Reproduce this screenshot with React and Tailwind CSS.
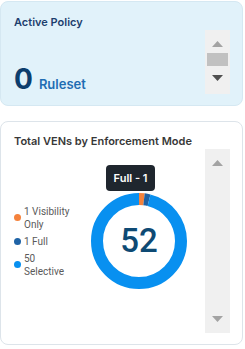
import React from "react";

function ScrollArrowUp({ color }) {
  return (
    <svg width="11" height="6" viewBox="0 0 11 6"><polygon points="5.5,0 11,6 0,6" fill={color} /></svg>
  );
}
function ScrollArrowDown({ color }) {
  return (
    <svg width="11" height="6" viewBox="0 0 11 6"><polygon points="0,0 11,0 5.5,6" fill={color} /></svg>
  );
}

function Donut() {
  const r = 42;
  const c = 2 * Math.PI * r;
  const total = 52;
  const segs = [
    { v: 1, color: "#f5823c" },
    { v: 1, color: "#1f63a6" },
    { v: 50, color: "#0890f0" },
  ];
  let off = 0;
  return (
    <svg width="96" height="96" viewBox="0 0 96 96">
      <g transform="rotate(-90 48 48)">
        {segs.map((s, i) => {
          const len = (s.v / total) * c;
          const el = (
            <circle
              key={i}
              cx="48"
              cy="48"
              r={r}
              fill="none"
              stroke={s.color}
              strokeWidth="12"
              strokeDasharray={`${len} ${c - len}`}
              strokeDashoffset={-off}
            />
          );
          off += len;
          return el;
        })}
      </g>
    </svg>
  );
}

export default function App() {
  return (
    <div className="w-[245px] h-[349px] bg-white pt-[1px]" style={{ fontFamily: "Inter, 'Noto Sans', sans-serif" }}>
      <div className="w-[243px] h-[105px] rounded-[8px] border border-[#d5e8f2] bg-[#e1f2fa] flex pl-[13px] pr-[12px]">
        <div className="flex-1 flex flex-col justify-between pt-[12px] pb-[11px]">
          <div className="text-[11px] leading-[16px] font-semibold text-[#1d3f6e]">Active Policy</div>
          <div className="flex items-baseline gap-[6px]">
            <span className="text-[28px] leading-[28px] font-bold text-[#0c3e6d]">0</span>
            <span className="text-[13px] font-semibold text-[#1f6db3]">Ruleset</span>
          </div>
        </div>
        <div className="mt-[28px] w-[25px] h-[64px] bg-[#f0f0f0] flex flex-col items-center pt-[11px]">
          <ScrollArrowUp color="#a3a3a3" />
          <div className="mt-[6px] w-[21px] h-[13px] bg-[#c1c1c1]" />
          <div className="mt-[9px]"><ScrollArrowDown color="#505050" /></div>
        </div>
      </div>

      <div className="mt-[15px] w-[243px] h-[224px] rounded-[8px] border border-[#dde4ea] bg-white flex flex-col pl-[13px] pr-[12px]">
        <div className="pt-[11px] text-[11px] leading-[16px] font-semibold text-[#383838]">Total VENs by Enforcement Mode</div>
        <div className="flex items-center">
          <div className="w-[77px] flex flex-col gap-[4px] text-[10px] leading-[13px] text-[#5a5a5a]" style={{ fontFamily: "Roboto, sans-serif" }}>
            <div className="flex items-center gap-[3px]">
              <span className="w-[7px] h-[7px] rounded-full bg-[#f5823c] shrink-0" />
              <span>1 Visibility<br />Only</span>
            </div>
            <div className="flex items-center gap-[3px]">
              <span className="w-[7px] h-[7px] rounded-full bg-[#1f63a6] shrink-0" />
              <span>1 Full</span>
            </div>
            <div className="flex items-center gap-[3px]">
              <span className="w-[7px] h-[7px] rounded-full bg-[#0890f0] shrink-0" />
              <span>50<br />Selective</span>
            </div>
          </div>
          <div className="relative w-[96px] h-[96px]">
            <Donut />
            <div className="absolute inset-0 flex items-center justify-center text-[33px] font-medium text-[#0e4a74]" style={{ fontFamily: "Roboto, sans-serif" }}>52</div>
            <div className="absolute left-[15px] top-[-28px] w-[49px] h-[26px] rounded-[4px] bg-[#1f262e] text-white text-[11px] font-semibold flex items-center justify-center">Full - 1</div>
          </div>
          <div className="ml-auto w-[25px] h-[184px] bg-[#f0f0f0] flex flex-col items-center justify-between pt-[11px] pb-[11px]">
            <ScrollArrowUp color="#a3a3a3" />
            <ScrollArrowDown color="#a3a3a3" />
          </div>
        </div>
      </div>
    </div>
  );
}
